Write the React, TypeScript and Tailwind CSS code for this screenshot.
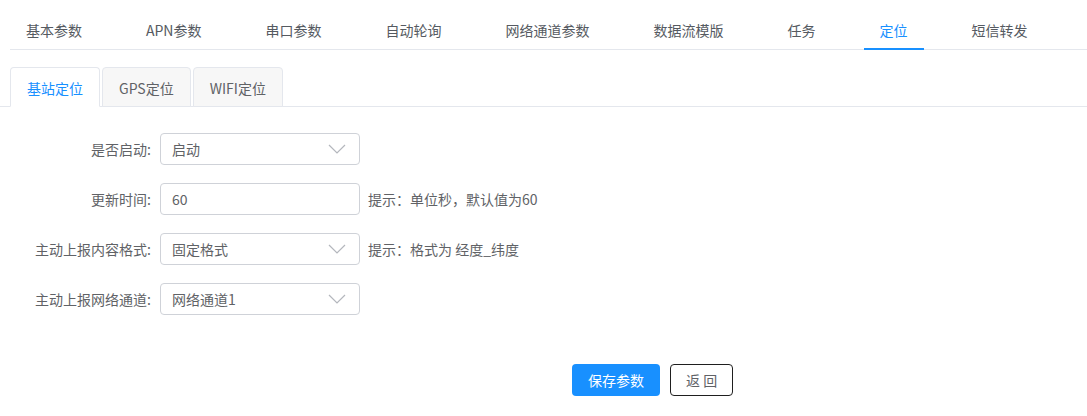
import { useState } from 'react';

const TOP_TABS = ['基本参数', 'APN参数', '串口参数', '自动轮询', '网络通道参数', '数据流模版', '任务', '定位', '短信转发'];
const SUB_TABS = ['基站定位', 'GPS定位', 'WIFI定位'];

function Chevron() {
  return (
    <svg width="18" height="10" viewBox="0 0 18 10" className="absolute right-[13px] top-1/2 -translate-y-1/2">
      <path d="M1 1 L9 9 L17 1" fill="none" stroke="#b4b7bd" strokeWidth="1.2" />
    </svg>
  );
}

function SelectBox({ value }: { value: string }) {
  return (
    <div className="relative w-[200px] h-[32px] border border-[#cfd2d8] rounded-[4px] pl-[11px] flex items-center text-[14px] text-[#606266] bg-white">
      {value}
      <Chevron />
    </div>
  );
}

function InputBox({ value }: { value: string }) {
  return (
    <div className="w-[200px] h-[32px] border border-[#cfd2d8] rounded-[4px] pl-[11px] flex items-center text-[14px] text-[#606266] bg-white">
      {value}
    </div>
  );
}

function Row({ label, children, hint }: { label: string; children: React.ReactNode; hint?: string }) {
  return (
    <div className="flex items-center h-[32px]">
      <div className="w-[152px] text-right text-[14px] text-[#606266] pr-[1px]">{label}</div>
      <div className="ml-[8px]">{children}</div>
      {hint && <div className="ml-[8px] text-[14px] text-[#606266]">{hint}</div>}
    </div>
  );
}

export default function App() {
  const [topTab, setTopTab] = useState('定位');
  const [subTab, setSubTab] = useState('基站定位');

  return (
    <div className="w-full min-h-[416px] bg-white" style={{ fontFamily: '"Noto Sans CJK SC", "Noto Sans", sans-serif' }}>
      {/* 顶部标签 */}
      <div className="pt-[10px] pl-[10px]">
        <div className="flex gap-8 h-[40px] border-b border-[#e4e7ed]">
          {TOP_TABS.map(t => (
            <div
              key={t}
              onClick={() => setTopTab(t)}
              className={`relative px-4 leading-[40px] text-[14px] cursor-pointer whitespace-nowrap ${
                topTab === t ? 'text-[#1890ff]' : 'text-[#555a61]'
              }`}
            >
              {t}
              {topTab === t && <div className="absolute left-0 right-0 bottom-[-1px] h-[2px] bg-[#1890ff]" />}
            </div>
          ))}
        </div>
      </div>

      {/* 定位方式 */}
      <div className="mt-[17px] flex gap-[2px] pl-[10px] border-b border-[#e4e7ed] h-[40px]">
        {SUB_TABS.map(t => (
          <div
            key={t}
            onClick={() => setSubTab(t)}
            className={`h-[40px] px-[16px] leading-[40px] text-[14px] border border-[#e4e7ed] rounded-t-[4px] cursor-pointer whitespace-nowrap ${
              subTab === t ? 'bg-white border-b-white text-[#1890ff]' : 'bg-[#f7f7f7] text-[#606266]'
            }`}
          >
            {t}
          </div>
        ))}
      </div>

      {/* 表单 */}
      <div className="mt-[26px] flex flex-col gap-[18px]">
        <Row label="是否启动:">
          <SelectBox value="启动" />
        </Row>
        <Row label="更新时间:" hint="提示：单位秒，默认值为60">
          <InputBox value="60" />
        </Row>
        <Row label="主动上报内容格式:" hint="提示：格式为 经度_纬度">
          <SelectBox value="固定格式" />
        </Row>
        <Row label="主动上报网络通道:">
          <SelectBox value="网络通道1" />
        </Row>
      </div>

      <div className="mt-[49px] ml-[572px] flex gap-[10px]">
        <button className="h-[32px] px-4 rounded-[4px] bg-[#1890ff] text-white text-[14px]">保存参数</button>
        <button className="h-[32px] px-[15px] rounded-[4px] border border-[#1f1f1f] bg-white text-[#606266] text-[14px]">返 回</button>
      </div>
    </div>
  );
}
